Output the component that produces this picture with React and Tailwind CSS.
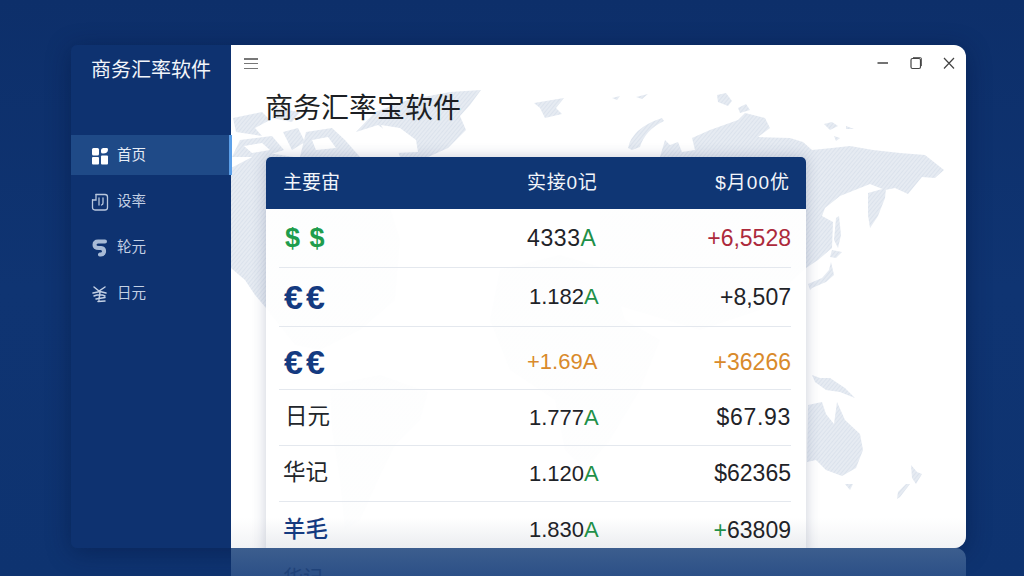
import React from 'react'

const FONT = "font-['Liberation_Sans','Noto_Sans_CJK_SC',sans-serif]"

const navItems = [
  { label: '首页', icon: 'home', active: true },
  { label: '设率', icon: 'rate' },
  { label: '轮元', icon: 'swirl' },
  { label: '日元', icon: 'yen' },
]

const rows = [
  { h: 'h-[59px]', name: '$ $', nameCls: 'text-[#1f9d4d] text-[27px] tracking-[1px] pl-[6px] font-bold', rate: '4333', rateCls: 'text-[#1f2328] text-[23px] tracking-[0.6px]', value: '+6,5528', valueCls: 'text-[#ad2a3c]' },
  { h: 'h-[59px]', name: '€€', nameCls: 'text-[#143a80] text-[34px] tracking-[3px] pl-[5px] font-bold', rate: '1.182', rateCls: 'text-[#1f2328] text-[22px] pl-[2px]', value: '+8,507', valueCls: 'text-[#1f2328]' },
  { h: 'h-[63px] pt-[8px]', name: '€€', nameCls: 'text-[#143a80] text-[34px] tracking-[3px] pl-[5px] font-bold', rate: '+1.69', rateCls: 'text-[#d98a2b] text-[22px]', value: '+36266', valueCls: 'text-[#d98a2b]', orangeA: true },
  { h: 'h-[56px]', name: '日元', nameCls: 'text-[#22262b] text-[22.5px] pl-[6px]', rate: '1.777', rateCls: 'text-[#1f2328] text-[22px] pl-[2px]', value: '$67.93', valueCls: 'text-[#1f2328] tracking-[0.7px]' },
  { h: 'h-[56px]', name: '华记', nameCls: 'text-[#22262b] text-[22.5px] pl-[4px]', rate: '1.120', rateCls: 'text-[#1f2328] text-[22px] pl-[2px]', value: '$62365', valueCls: 'text-[#1f2328]' },
  { h: 'h-[56px]', name: '羊毛', nameCls: 'text-[#143a80] text-[22.5px] font-medium pl-[4px]', rate: '1.830', rateCls: 'text-[#1f2328] text-[22px] pl-[2px]', value: '63809', plus: true, valueCls: 'text-[#1f2328]' },
]

function NavIcon({ type }) {
  if (type === 'home') {
    return (
      <svg width="18" height="18" viewBox="0 0 18 18" fill="#fff">
        <rect x="1" y="1" width="7" height="7.5" rx="1.5" />
        <path d="M10 3.5 Q10 1 12.5 1 L16 1 Q17 1 17 2.5 Q17 6.5 12 6.5 Q10 6.5 10 5 Z" />
        <rect x="1" y="10" width="7" height="7.5" rx="1" />
        <rect x="10" y="8.5" width="7" height="9" rx="1" />
      </svg>
    )
  }
  if (type === 'rate') {
    return (
      <svg width="18" height="18" viewBox="0 0 18 18" fill="none" stroke="#b9c8de" strokeWidth="1.3" strokeLinecap="round">
        <path d="M5 1.5 H14 Q16.5 1.5 16.5 4 V14.5 Q16.5 17 14 17 H4 Q1.5 17 1.5 14.5 V7" />
        <path d="M1.5 7 H5 V1.5" />
        <path d="M8 5 V12 M12 5 V10 Q12 11.5 10.5 12" />
      </svg>
    )
  }
  if (type === 'swirl') {
    return (
      <svg width="18" height="18" viewBox="0 0 18 18" fill="none" stroke="#a8bbd6" strokeWidth="4" strokeLinecap="round">
        <path d="M14 2.5 H7 Q3.5 2.5 3.5 6 Q3.5 9 8 9 H10 Q13.5 9.5 13 13 Q12 16 9 15.5" />
      </svg>
    )
  }
  return (
    <svg width="18" height="18" viewBox="0 0 18 18" fill="none" stroke="#c3d0e4" strokeWidth="1.5" strokeLinecap="round">
      <path d="M3 2 L8 6 L14 2 M2 8 L9 6.5 L15 8 M3 11 Q9 8.5 14 11 M5 14 L14 12.5 M7 16.5 L14 16 M9 7 L8 15" />
    </svg>
  )
}

function WorldMap() {
  return (
    <svg className="absolute inset-0 w-full h-full" viewBox="231 45 735 503" fill="url(#mapStripes)">
      <defs>
        <pattern id="mapStripes" width="3" height="3" patternUnits="userSpaceOnUse" patternTransform="rotate(-50)">
          <rect width="3" height="3" fill="#e6ebf2" />
          <rect width="3" height="1" fill="#dbe2ec" />
        </pattern>
      </defs>
      {/* north america */}
      <path d="M231 168 L262 152 L300 158 L340 157 L380 175 L400 240 L395 300 L360 330 L320 350 L295 345 L266 308 L255 295 L245 280 L231 268 Z" />
      {/* arctic islands */}
      <path d="M233 118 L262 112 L270 120 L255 128 L262 136 L236 132 Z" />
      <path d="M275 108 L300 112 L292 122 L272 118 Z" />
      <path d="M240 140 L272 136 L284 150 L262 157 L232 157 Z" />
      <path d="M306 132 L332 128 L345 140 L360 157 L300 157 Z" />
      <path d="M283 132 L298 128 L305 142 L292 150 Z" />
      {/* greenland */}
      <path d="M356 132 L375 112 L408 100 L450 92 L481 90 L470 105 L460 116 L466 130 L448 148 L428 157 L400 157 L392 135 L378 125 Z" />
      <path d="M381 125 L400 128 L416 140 L418 152 L396 153 L388 138 Z" fill="#fff" />
      {/* lakes and sounds of the arctic */}
      <path d="M244 146 L262 143 L270 150 L252 153 Z M312 140 L328 137 L336 148 L316 150 Z" fill="#fff" />
      {/* iceland and svalbard */}
      <path d="M534 103 L552 100 L564 98 L556 108 L562 114 L545 118 L540 108 Z" />
      <path d="M612 98 L620 96 L617 100 Z M636 97 L648 94 L642 99 Z" />
      <path d="M717 95 L726 93 L732 101 L728 106 L718 102 Z M738 108 L746 104 L750 110 L740 113 Z" />
      <path d="M824 124 L832 122 L838 126 L830 130 Z M846 126 L854 129 L846 129 Z M834 136 L840 138 L836 141 Z" />
      {/* novaya zemlya */}
      <path d="M628 148 Q632 128 662 118 L664 121 Q645 130 640 147 L632 150 Z" />
      {/* eurasia */}
      <path d="M660 157 L665 140 L670 145 L678 142 L682 152 L695 150 L692 138 L710 130 L738 120 L745 113 L765 118 L770 128 L758 137 L790 138 L803 142 L812 150 L832 148 L850 146 L873 150 L900 153 L925 155 L944 170 L935 178 L922 177 L908 194 L895 188 L885 190 L870 184 L855 190 L840 196 L825 208 L822 216 L833 222 L832 248 L818 260 L806 268 L760 310 L700 330 L600 300 L600 157 Z" />
      {/* kamchatka */}
      <path d="M886 188 L868 193 L868 215 L870 228 L878 216 L885 198 Z" />
      {/* sakhalin and japan */}
      <path d="M836 218 L839 216 L841 235 L838 248 L834 240 Z" />
      <path d="M832 250 L842 252 L836 258 L830 257 Z" />
      <path d="M831 262 L834 275 L826 282 L812 288 L810 290 L808 284 L822 278 L829 270 Z" />
      {/* papua */}
      <path d="M812 375 L820 378 L830 378 L845 388 L855 398 L840 392 L826 390 L815 382 Z" />
      {/* australia, tasmania, new zealand */}
      <path d="M808 405 L822 402 L826 414 L834 424 L837 402 L845 420 L860 434 L863 450 L856 468 L842 476 L826 470 L816 460 L807 462 Z" />
      <path d="M845 484 L853 484 L850 490 Z" />
      <path d="M911 465 L917 472 L922 474 L916 484 L912 478 Z" />
      <path d="M910 484 L900 497 L897 499 L898 492 L906 484 Z" />
      {/* africa, south america seen through the card */}
      <path d="M500 270 L560 255 L610 270 L625 320 L660 340 L640 390 L610 440 L585 470 L565 450 L555 400 L510 370 L490 320 Z" />
      <path d="M612 395 L620 388 L616 415 L610 425 Z" />
      <path d="M330 385 L380 375 L428 392 L420 420 L395 445 L378 480 L360 520 L345 530 L340 480 L332 430 Z" />
    </svg>
  )
}

function WindowControls() {
  return (
    <div className="absolute top-[11px] right-[11px] flex items-center gap-[21px]">
      <svg width="12" height="14" viewBox="0 0 12 14" stroke="#444" strokeWidth="1.4"><path d="M0.5 7 H11" /></svg>
      <svg width="12" height="14" viewBox="0 0 12 14" fill="none" stroke="#444" strokeWidth="1.2">
        <rect x="1" y="2.5" width="9.5" height="10" rx="1.5" />
        <path d="M3 1.5 H10.5 Q11.5 1.5 11.5 3 V10" strokeWidth="0.8" />
      </svg>
      <svg width="12" height="14" viewBox="0 0 12 14" stroke="#444" strokeWidth="1.2"><path d="M1 2 L11 12.5 M11 2 L1 12.5" /></svg>
    </div>
  )
}

export default function App() {
  return (
    <div className={`${FONT} h-[576px] w-[1024px] overflow-hidden bg-gradient-to-b from-[#0d2f6a] via-[#0f3472] to-[#0e3370] pt-[45px] pl-[71px]`}>
      <div className="flex h-[503px] w-[895px] overflow-hidden rounded-r-[12px] rounded-l-[6px] shadow-[0_4px_24px_rgba(4,20,60,0.45)]">
        {/* Sidebar */}
        <div className="w-[160px] shrink-0 bg-[#0e3270]">
          <div className="pl-[20px] pt-[10px] text-[20px] leading-[30px] text-[#f2f5fa]">商务汇率软件</div>
          <div className="mt-[50px]">
            {navItems.map(item => (
              <div
                key={item.label}
                className={`mb-[6px] flex h-[40px] items-center gap-[8px] pl-[20px] pt-[1px] text-[14.5px] ${item.active ? 'border-r-2 border-[#5b9fe8] bg-[#1f4a87] text-[#e6edf6]' : 'text-[#c3d0e4]'}`}
              >
                <NavIcon type={item.icon} />
                <span>{item.label}</span>
              </div>
            ))}
          </div>
        </div>

        {/* Main */}
        <div className="relative flex-1 overflow-hidden bg-white">
          <WorldMap />
          <div className="absolute inset-x-0 bottom-0 h-[30px] bg-gradient-to-b from-transparent to-[#eceef1]/70" />
          <div className="absolute left-0 top-[90px] h-[40px] w-[1px] bg-[#5b9fe8]" />
          <WindowControls />
          <div className="relative pl-[13px] pt-[13px]">
            <div className="flex h-[11px] w-[14px] flex-col justify-between">
              <div className="h-[1.5px] bg-[#777]" />
              <div className="h-[1.5px] bg-[#777]" />
              <div className="h-[1.5px] bg-[#777]" />
            </div>
          </div>
          <h1 className="relative mt-[20px] pl-[34px] text-[28px] font-normal leading-[40px] text-[#1c1f24]">商务汇率宝软件</h1>
          <div className="relative ml-[35px] mt-[28px] w-[540px] overflow-hidden rounded-t-[5px] bg-[linear-gradient(to_bottom,rgba(255,255,255,0.95)_90%,rgba(236,238,241,0.97)_97%)] shadow-[0_0_14px_rgba(60,80,120,0.28)]">
            <div className="grid h-[52px] grid-cols-[244px_1fr_auto] items-center bg-[#0f3674] pl-[17px] pr-[16px] text-[19px] text-[#f2f5fa]">
              <span>主要宙</span>
              <span className="tracking-[0.7px]">实接0记</span>
              <span className="tracking-[1px]">$月00优</span>
            </div>
            <div className="ml-[13px] mr-[15px]">
              {rows.map((r, i) => (
                <div
                  key={i}
                  className={`grid ${r.h} grid-cols-[248px_1fr_auto] items-center ${i < rows.length - 1 ? 'border-b border-[#e4e8ee]' : ''} text-[23px] leading-none`}
                >
                  <span className={r.nameCls}>{r.name}</span>
                  <span className={r.rateCls}>
                    {r.rate}
                    <span className={r.orangeA ? '' : 'text-[#1f9049]'}>A</span>
                  </span>
                  <span className={r.valueCls}>
                    {r.plus && <span className="text-[#1f9049]">+</span>}
                    {r.value}
                  </span>
                </div>
              ))}
            </div>
          </div>
        </div>
      </div>

      {/* Reflection below the window */}
      <div className="ml-[160px] h-[28px] w-[735px] overflow-hidden rounded-tr-[10px] bg-gradient-to-b from-[#3c5e8e] to-[#2c5087]">
        <div className="ml-[52px] pt-[18px] text-[20px] leading-[24px] text-[#1f4279]">华记</div>
      </div>
    </div>
  )
}
